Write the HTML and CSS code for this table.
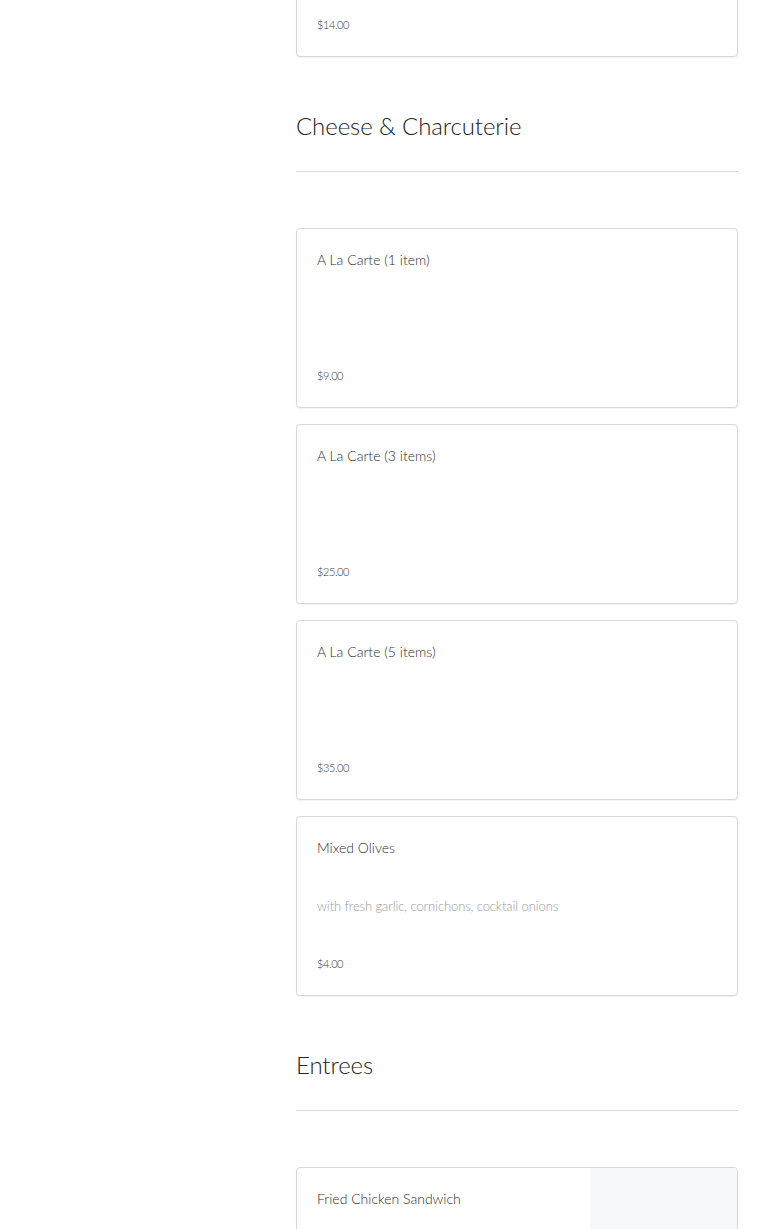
FILE: index.html
```html
<!DOCTYPE html>
<html>
<head>
<meta charset="utf-8">
<link rel="stylesheet" href="styles.css">
</head>
<body>
<div class="page">
  <aside class="sidebar"></aside>
  <main class="menu">
    <div class="items items-first">
      <div class="card">
        <div class="title"></div>
        <div class="desc"></div>
        <div class="price">$14.00</div>
      </div>
    </div>

    <section class="section">
      <h2 class="section-title">Cheese &amp; Charcuterie</h2>
      <div class="items">
        <div class="card">
          <div class="title">A La Carte (1 item)</div>
          <div class="desc"></div>
          <div class="price">$9.00</div>
        </div>
        <div class="card">
          <div class="title">A La Carte (3 items)</div>
          <div class="desc"></div>
          <div class="price">$25.00</div>
        </div>
        <div class="card">
          <div class="title">A La Carte (5 items)</div>
          <div class="desc"></div>
          <div class="price">$35.00</div>
        </div>
        <div class="card">
          <div class="title">Mixed Olives</div>
          <div class="desc">with fresh garlic, cornichons, cocktail onions</div>
          <div class="price">$4.00</div>
        </div>
      </div>
    </section>

    <section class="section">
      <h2 class="section-title">Entrees</h2>
      <div class="items">
        <div class="card card-img">
          <div class="card-body">
            <div class="title">Fried Chicken Sandwich</div>
            <div class="desc"></div>
            <div class="price"></div>
          </div>
          <div class="card-photo"></div>
        </div>
      </div>
    </section>
  </main>
</div>
</body>
</html>
```

FILE: styles.css
```css
* { box-sizing: border-box; }
html, body { margin: 0; padding: 0; background: #fff; }
body {
  font-family: "Lato", "Open Sans", sans-serif;
  font-weight: 300;
  color: #333;
}
.page {
  display: grid;
  grid-template-columns: 232px 1fr;
  gap: 32px;
  padding: 0 32px;
}
.menu { min-width: 0; }
.items {
  display: flex;
  flex-direction: column;
  gap: 16px;
}
.items-first { margin-top: -123px; }
.section-title {
  margin: 53px 0 56px;
  padding: 0 0 29px;
  border-bottom: 1px solid #dcdcdc;
  font-size: 24px;
  line-height: 32px;
  font-weight: 300;
  color: #222;
  letter-spacing: -0.1px;
}
.card {
  height: 180px;
  border: 1px solid #d8d8d8;
  border-radius: 4px;
  box-shadow: 0 1px 2px rgba(0,0,0,0.06);
  padding: 19px 20px 19px;
  display: flex;
  flex-direction: column;
  justify-content: space-between;
  background: #fff;
}
.title {
  font-size: 14px;
  line-height: 24px;
  color: #2e2e2e;
  letter-spacing: 0;
}
.desc {
  font-size: 13px;
  line-height: 24px;
  color: #9a9a9a;
  letter-spacing: -0.1px;
  min-height: 24px;
}
.price {
  font-size: 11px;
  line-height: 24px;
  color: #3a3a3a;
  letter-spacing: -0.4px;
  min-height: 24px;
}
.card-img {
  padding: 0;
  flex-direction: row;
  overflow: hidden;
  height: 200px;
}
.card-body {
  flex: 1;
  padding: 19px 20px;
  display: flex;
  flex-direction: column;
  justify-content: space-between;
}
.card-photo {
  width: 147px;
  background: #f6f8f9;
}
```
